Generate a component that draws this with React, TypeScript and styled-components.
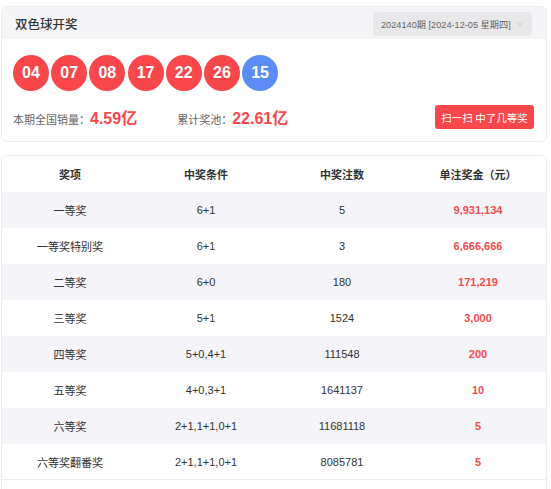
import React from "react";
import styled, { createGlobalStyle } from "styled-components";
import { ChevronDown } from "lucide-react";

const Global = createGlobalStyle`
  html, body { margin: 0; padding: 0; background: #ffffff; }
  body { font-family: "Liberation Sans", "Noto Sans CJK SC", sans-serif; color: #333; }
  * { box-sizing: border-box; }
`;

const Page = styled.div`
  width: 551px;
  padding: 6px 4px 0 1px;
  display: flex;
  flex-direction: column;
  gap: 13px;
`;

const Card = styled.section`
  border: 1px solid #ececf0;
  border-radius: 6px;
  background: #fff;
  overflow: hidden;
`;

const CardHeader = styled.header`
  height: 32px;
  background: #f5f5f8;
  display: flex;
  align-items: center;
  justify-content: space-between;
  padding: 0 14px 0 13px;
`;

const Title = styled.h1`
  margin: 0;
  font-size: 12.5px;
  font-weight: 500;
  color: #333;
`;

const Select = styled.div`
  height: 24px;
  width: 159px;
  margin-top: 2px;
  background: #e8e8ea;
  border-radius: 4px;
  display: flex;
  align-items: center;
  justify-content: space-between;
  padding: 0 7px 0 8px;
  font-size: 9.2px;
  color: #666;
  white-space: nowrap;
  svg { flex-shrink: 0; }
`;

const DrawBody = styled.div`
  padding: 16px 12px 12px 11px;
  display: flex;
  flex-direction: column;
  gap: 14px;
`;

const Balls = styled.div`
  display: flex;
  gap: 2.2px;
`;

const Ball = styled.span<{ $blue?: boolean }>`
  width: 36px;
  height: 36px;
  border-radius: 50%;
  background: ${(p) => (p.$blue ? "#5b8cf8" : "#f9474b")};
  color: #fff;
  font-weight: 700;
  font-size: 16px;
  display: flex;
  align-items: center;
  justify-content: center;
`;

const InfoRow = styled.div`
  display: flex;
  align-items: center;
  height: 24px;
`;

const Stat = styled.div<{ $gap?: number }>`
  display: flex;
  align-items: baseline;
  margin-left: ${(p) => p.$gap ?? 0}px;
`;

const StatLabel = styled.span`
  font-size: 11px;
  color: #666;
  font-family: "Noto Sans CJK SC", sans-serif;
`;

const StatValue = styled.span`
  font-size: 16px;
  font-weight: 700;
  color: #f9474b;
`;

const ScanButton = styled.button`
  margin-left: auto;
  width: 99px;
  height: 24px;
  border: none;
  border-radius: 3px;
  background: #f9474b;
  color: #fff;
  font-family: "Noto Sans CJK SC", sans-serif;
  font-size: 10.5px;
  padding: 0;
  cursor: pointer;
`;

const Table = styled.div`
  display: flex;
  flex-direction: column;
  padding-bottom: 20px;
`;

const Row = styled.div<{ $shade?: boolean; $head?: boolean; $last?: boolean }>`
  display: grid;
  grid-template-columns: repeat(4, 1fr);
  height: 36px;
  align-items: center;
  background: ${(p) => (p.$shade ? "#f5f5f9" : "#fff")};
  font-size: 11px;
  font-weight: ${(p) => (p.$head ? 700 : 400)};
  color: #333;
  border-bottom: ${(p) => (p.$last ? "1px solid #ececf0" : "none")};
`;

const Cell = styled.div<{ $money?: boolean }>`
  text-align: center;
  color: ${(p) => (p.$money ? "#f84a4f" : "inherit")};
  font-weight: ${(p) => (p.$money ? 700 : "inherit")};
`;

const reds = ["04", "07", "08", "17", "22", "26"];
const rows = [
  ["一等奖", "6+1", "5", "9,931,134"],
  ["一等奖特别奖", "6+1", "3", "6,666,666"],
  ["二等奖", "6+0", "180", "171,219"],
  ["三等奖", "5+1", "1524", "3,000"],
  ["四等奖", "5+0,4+1", "111548", "200"],
  ["五等奖", "4+0,3+1", "1641137", "10"],
  ["六等奖", "2+1,1+1,0+1", "11681118", "5"],
  ["六等奖翻番奖", "2+1,1+1,0+1", "8085781", "5"],
];

export default function App() {
  return (
    <>
      <Global />
      <Page>
        <Card>
          <CardHeader>
            <Title>双色球开奖</Title>
            <Select>
              <span>2024140期 [2024-12-05 星期四]</span>
              <ChevronDown size={10} color="#b5b5b5" strokeWidth={1.5} />
            </Select>
          </CardHeader>
          <DrawBody>
            <Balls>
              {reds.map((n) => (
                <Ball key={n}>{n}</Ball>
              ))}
              <Ball $blue>15</Ball>
            </Balls>
            <InfoRow>
              <Stat>
                <StatLabel>本期全国销量：</StatLabel>
                <StatValue>4.59亿</StatValue>
              </Stat>
              <Stat $gap={40}>
                <StatLabel>累计奖池：</StatLabel>
                <StatValue>22.61亿</StatValue>
              </Stat>
              <ScanButton>扫一扫 中了几等奖</ScanButton>
            </InfoRow>
          </DrawBody>
        </Card>
        <Card>
          <Table>
            <Row $head>
              <Cell>奖项</Cell>
              <Cell>中奖条件</Cell>
              <Cell>中奖注数</Cell>
              <Cell>单注奖金（元）</Cell>
            </Row>
            {rows.map((r, i) => (
              <Row key={r[0]} $shade={i % 2 === 0} $last={i === rows.length - 1}>
                <Cell>{r[0]}</Cell>
                <Cell>{r[1]}</Cell>
                <Cell>{r[2]}</Cell>
                <Cell $money>{r[3]}</Cell>
              </Row>
            ))}
          </Table>
        </Card>
      </Page>
    </>
  );
}
